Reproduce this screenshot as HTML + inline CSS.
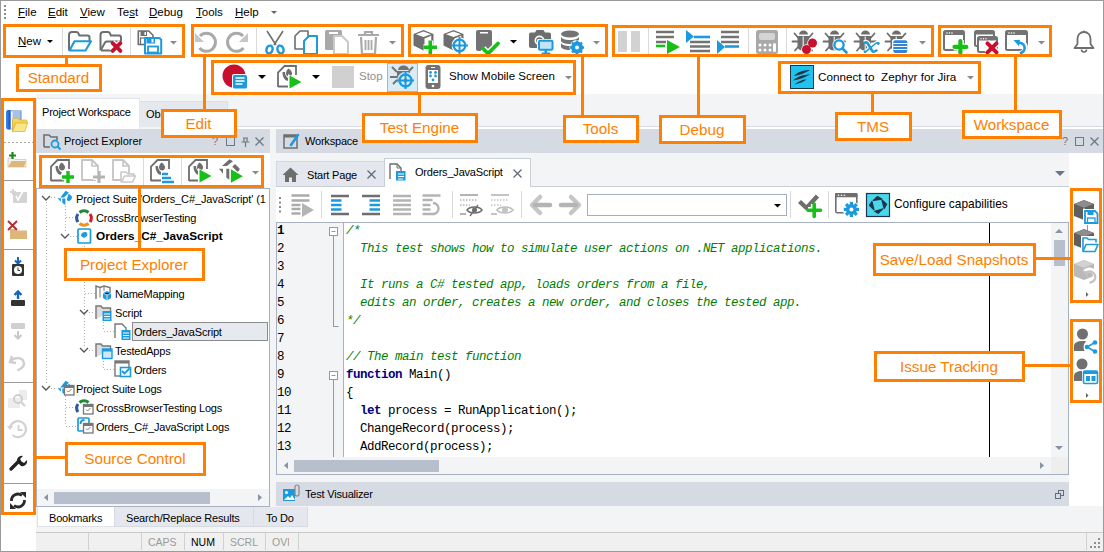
<!DOCTYPE html>
<html><head><meta charset="utf-8">
<style>
*{margin:0;padding:0;box-sizing:border-box}
html,body{width:1104px;height:552px;overflow:hidden;background:#fff}
body{position:relative;font-family:"Liberation Sans",sans-serif;font-size:11px;color:#000}
.a{position:absolute}
.ob{position:absolute;border:3px solid #ff8000}
.ol{position:absolute;background:#ff8000}
.lb{display:flex;align-items:center;justify-content:center;color:#ff8000;font-size:15.2px;white-space:nowrap;line-height:1;background:#fff;padding-right:1px}
.t{position:absolute;white-space:nowrap;line-height:1}
.mono{font-family:"Liberation Mono",monospace;font-size:12.5px;letter-spacing:-0.5px;line-height:18px;white-space:pre}
svg{position:absolute;overflow:visible}
</style></head><body>
<!-- light gray work bg -->
<div class="a" style="left:36px;top:94px;width:1067px;height:438px;background:#f3f4f6"></div>

<!-- status bar -->
<div class="a" style="left:36px;top:532px;width:1067px;height:19px;background:#f0f0f0;border-top:1px solid #c9c9c9"></div>

<!-- CONTENT -->
<!-- menu bar -->
<svg style="left:4px;top:5px" width="3" height="15"><rect x="0" y="0" width="2" height="2" fill="#8a8a8a"/><rect x="0" y="4" width="2" height="2" fill="#8a8a8a"/><rect x="0" y="8" width="2" height="2" fill="#8a8a8a"/><rect x="0" y="12" width="2" height="2" fill="#8a8a8a"/></svg>
<div class="t" style="left:18px;top:7px;font-size:11.5px"><u>F</u>ile</div>
<div class="t" style="left:48px;top:7px;font-size:11.5px"><u>E</u>dit</div>
<div class="t" style="left:80px;top:7px;font-size:11.5px"><u>V</u>iew</div>
<div class="t" style="left:117px;top:7px;font-size:11.5px">Te<u>s</u>t</div>
<div class="t" style="left:149px;top:7px;font-size:11.5px"><u>D</u>ebug</div>
<div class="t" style="left:196px;top:7px;font-size:11.5px"><u>T</u>ools</div>
<div class="t" style="left:235px;top:7px;font-size:11.5px"><u>H</u>elp</div>
<svg style="left:271px;top:11px" width="6" height="4"><path d="M0 0H6L3 3Z" fill="#666"/></svg>

<!-- toolbar row1: Standard -->
<div class="t" style="left:18px;top:36px;font-size:11.5px"><u>N</u>ew</div>
<svg style="left:47px;top:40px" width="6" height="4"><path d="M0 0H6L3 3Z" fill="#000"/></svg>
<div class="a" style="left:62px;top:28px;width:1px;height:27px;background:#dadada"></div>
<svg style="left:64px;top:27px" width="64" height="30" viewBox="0 0 64 30"><path d="M5 23.5V8a3 3 0 0 1 3-3h4.5c1 0 1.6 0.6 2 1.5l0.8 2h8.2a2 2 0 0 1 2 2v3.5" fill="none" stroke="#6e6e6e" stroke-width="2"/><path d="M5.5 23.5L10.5 14.3h16.5l-5.5 9.2z" fill="#fff" stroke="#1b9ae0" stroke-width="2.1" stroke-linejoin="round"/><path d="M36.5 23.5V8a3 3 0 0 1 3-3h4.5c1 0 1.6 0.6 2 1.5l0.8 2h8.2a2 2 0 0 1 2 2v4" fill="none" stroke="#6e6e6e" stroke-width="2"/><path d="M37 22.8L41 15.5c0.5-0.8 1-1 2-1h14M37 23.5h10" fill="none" stroke="#6e6e6e" stroke-width="2"/><path d="M48 15.5l9 9M57 15.5l-9 9" stroke="#fff" stroke-width="6.5"/><path d="M48.6 16.1l7.8 7.8M56.4 16.1l-7.8 7.8" stroke="#c8102e" stroke-width="3.8" stroke-linecap="round"/></svg>
<div class="a" style="left:130px;top:28px;width:1px;height:27px;background:#dadada"></div>
<svg style="left:134px;top:27px" width="30" height="30" viewBox="0 0 30 30"><path d="M4.3 4h10.5l4.2 4.2V17.5H4.3z" fill="#fff" stroke="#6e6e6e" stroke-width="1.6" stroke-linejoin="round"/><rect x="6.5" y="4" width="6.5" height="5" fill="#6e6e6e"/><rect x="10.5" y="5" width="1.5" height="3" fill="#fff"/><rect x="6.5" y="11" width="10" height="6.5" fill="none" stroke="#6e6e6e" stroke-width="1.2"/><path d="M11 11h14.5l1.7 1.8V26.5H11z" fill="#fff" stroke="#1b9ae0" stroke-width="2" stroke-linejoin="round"/><rect x="12.5" y="11" width="8.5" height="5.5" fill="#1b9ae0"/><rect x="17.5" y="12" width="2" height="3.5" fill="#fff"/><rect x="14" y="19.5" width="10" height="6" fill="none" stroke="#1b9ae0" stroke-width="1.8"/></svg>
<svg style="left:170px;top:41px" width="7" height="4"><path d="M0 0H7L3.5 3.5Z" fill="#8a8a8a"/></svg>

<!-- Edit group -->
<svg style="left:194px;top:30px" width="24" height="24" viewBox="0 0 24 24"><path d="M6 6A9 9 0 1 1 5.5 18" fill="none" stroke="#a9a9a9" stroke-width="3"/><path d="M1 3v9h9z" fill="#c6c6c6"/></svg>
<svg style="left:225px;top:30px" width="24" height="24" viewBox="0 0 24 24"><path d="M18 6A9 9 0 1 0 18.5 18" fill="none" stroke="#a9a9a9" stroke-width="3"/><path d="M23 3v9h-9z" fill="#c6c6c6"/></svg>
<div class="a" style="left:256px;top:28px;width:1px;height:27px;background:#dadada"></div>
<svg style="left:264px;top:30px" width="22" height="25" viewBox="0 0 22 25"><path d="M3 1l9 14M19 1l-9 14" stroke="#6e6e6e" stroke-width="1.6" fill="none"/><ellipse cx="5.5" cy="19.5" rx="3" ry="4" transform="rotate(20 5.5 19.5)" fill="none" stroke="#1b9ae0" stroke-width="2.4"/><ellipse cx="16.5" cy="19.5" rx="3" ry="4" transform="rotate(-20 16.5 19.5)" fill="none" stroke="#1b9ae0" stroke-width="2.4"/></svg>
<svg style="left:294px;top:30px" width="25" height="25" viewBox="0 0 25 25"><path d="M1 6l5-5h8v18H1z" fill="#fff" stroke="#6e6e6e" stroke-width="1.6" stroke-linejoin="round"/><path d="M10 11l5-5h8v18H10z" fill="#fff" stroke="#1b9ae0" stroke-width="2" stroke-linejoin="round"/></svg>
<svg style="left:325px;top:30px" width="25" height="25" viewBox="0 0 25 25"><rect x="0" y="0" width="17" height="20" rx="1.5" fill="#a9a9a9"/><rect x="4" y="2" width="9" height="2" fill="#fff"/><path d="M9 6h8l6 6v12H9z" fill="#fff" stroke="#c9c9c9" stroke-width="2" stroke-linejoin="round"/></svg>
<svg style="left:357px;top:30px" width="23" height="25" viewBox="0 0 23 25"><path d="M1 5h21M8 5V2h7v3" fill="none" stroke="#a9a9a9" stroke-width="2.2"/><path d="M4 7l1 17h13l1-17" fill="none" stroke="#a9a9a9" stroke-width="2.2"/><path d="M8.5 10v10M11.5 10v10M14.5 10v10" stroke="#a9a9a9" stroke-width="1.8"/></svg>
<svg style="left:389px;top:41px" width="7" height="4"><path d="M0 0H7L3.5 3.5Z" fill="#8a8a8a"/></svg>

<!-- Tools group -->
<svg style="left:410px;top:27px" width="30" height="30" viewBox="0 0 30 30"><path d="M3.5 7L13.5 3 23.5 7V18.5L13.5 23.5 3.5 18.5z" fill="#6e6e6e"/><path d="M6 7.2L13.5 4.4 21 7.2 13.5 10z" fill="#fff"/><path d="M14.5 11.5L22 8.6V18L14.5 22z" fill="#fff"/><path d="M22 8.6V18" stroke="#6e6e6e" stroke-width="1.5"/><path d="M13.5 20.3h13.5M20.3 13.6v13.5" stroke="#fff" stroke-width="6"/><path d="M13.5 20.3h13.5M20.3 13.6v13.5" stroke="#16c016" stroke-width="3.6"/></svg>
<svg style="left:440px;top:27px" width="30" height="30" viewBox="0 0 30 30"><path d="M3.5 7L13.5 3 23.5 7V18.5L13.5 23.5 3.5 18.5z" fill="#6e6e6e"/><path d="M6 7.2L13.5 4.4 21 7.2 13.5 10z" fill="#fff"/><path d="M14.5 11.5L22 8.6V18L14.5 22z" fill="#fff"/><path d="M22 8.6V18" stroke="#6e6e6e" stroke-width="1.5"/><circle cx="19.5" cy="18.5" r="8" fill="#fff"/><circle cx="19.5" cy="18.5" r="5.8" fill="none" stroke="#1b9ae0" stroke-width="2.2"/><path d="M19.5 10v17M11 18.5h17" stroke="#1b9ae0" stroke-width="2"/></svg>
<svg style="left:475px;top:30px" width="25" height="25" viewBox="0 0 25 25"><rect x="1" y="0" width="16" height="21" rx="2" fill="#737373"/><rect x="5" y="2" width="8" height="1.5" fill="#fff"/><path d="M8 18.5l5 5 10-10" fill="none" stroke="#fff" stroke-width="6.5"/><path d="M8 18.5l5 5 10-10" fill="none" stroke="#16c016" stroke-width="3.8" stroke-linecap="round"/></svg>
<svg style="left:510px;top:40px" width="7" height="4"><path d="M0 0H7L3.5 3.5Z" fill="#000"/></svg>
<svg style="left:520px;top:27px" width="36" height="30" viewBox="0 0 36 30"><path d="M9 7.5a2 2 0 0 1 2-2h4l1.5-2.5h7l1.5 2.5h4a2 2 0 0 1 2 2V19a2 2 0 0 1-2 2H11a2 2 0 0 1-2-2z" fill="#6e6e6e"/><circle cx="19.5" cy="13.5" r="5" fill="#fff"/><circle cx="19.5" cy="13.5" r="3.3" fill="#6e6e6e"/><rect x="17" y="12" width="17" height="12" rx="1.5" fill="#fff"/><rect x="19" y="13.8" width="13.5" height="9" rx="1" fill="#c3e4f7" stroke="#1b9ae0" stroke-width="2"/><rect x="24.5" y="23" width="2.6" height="3" fill="#1b9ae0"/><rect x="21.5" y="25.5" width="9" height="1.8" rx="0.9" fill="#1b9ae0"/></svg>
<svg style="left:560px;top:30px" width="25" height="25" viewBox="0 0 25 25"><ellipse cx="10" cy="4" rx="9" ry="3.5" fill="#737373"/><path d="M1 6.5v4c0 2 4 3.5 9 3.5s9-1.5 9-3.5v-4c0 2-4 3.5-9 3.5s-9-1.5-9-3.5z" fill="#737373"/><path d="M1 12.5v4c0 2 4 3.5 9 3.5s9-1.5 9-3.5v-4c0 2-4 3.5-9 3.5s-9-1.5-9-3.5z" fill="#737373"/><circle cx="17" cy="17.5" r="7.5" fill="#fff"/><circle cx="17" cy="17.5" r="4.5" fill="none" stroke="#1b9ae0" stroke-width="3"/><path d="M17 10.5v14M10 17.5h14M12 12.5l10 10M22 12.5l-10 10" stroke="#1b9ae0" stroke-width="2.4"/><circle cx="17" cy="17.5" r="2" fill="#fff"/></svg>
<svg style="left:593px;top:41px" width="7" height="4"><path d="M0 0H7L3.5 3.5Z" fill="#8a8a8a"/></svg>

<!-- Debug group -->
<div class="a" style="left:618px;top:31px;width:9px;height:21px;background:#d2d2d2"></div>
<div class="a" style="left:631px;top:31px;width:9px;height:21px;background:#d2d2d2"></div>
<div class="a" style="left:648px;top:28px;width:1px;height:27px;background:#dadada"></div>
<svg style="left:656px;top:30px" width="24" height="25" viewBox="0 0 24 25"><path d="M0 2h18M0 7h18M0 12h10" stroke="#737373" stroke-width="2.6"/><path d="M0 16h9" stroke="#16c016" stroke-width="2.6"/><path d="M11 10l13 7-13 7z" fill="#16c016"/></svg>
<svg style="left:686px;top:30px" width="24" height="25" viewBox="0 0 24 25"><path d="M0 0l8 6.5L0 13z" fill="#1b9ae0"/><path d="M8 7h16" stroke="#1b9ae0" stroke-width="2.6"/><path d="M4 12h20M4 16.5h20M4 21h20" stroke="#737373" stroke-width="2.6"/></svg>
<svg style="left:717px;top:30px" width="24" height="25" viewBox="0 0 24 25"><path d="M4 2h18M4 7h18M4 12h18" stroke="#737373" stroke-width="2.6"/><path d="M0 10l8 7-8 7z" fill="#1b9ae0"/><path d="M8 16.5h14" stroke="#1b9ae0" stroke-width="2.6"/></svg>
<div class="a" style="left:748px;top:28px;width:1px;height:27px;background:#dadada"></div>
<svg style="left:756px;top:30px" width="23" height="25" viewBox="0 0 23 25"><rect x="0" y="0" width="22" height="24" rx="2.5" fill="#a9a9a9"/><rect x="3" y="3" width="16" height="7" rx="2" fill="#d4d4d4"/><circle cx="4" cy="15" r="1.5" fill="#fff"/><circle cx="9" cy="15" r="1.5" fill="#fff"/><circle cx="14" cy="15" r="1.5" fill="#fff"/><circle cx="4" cy="20" r="1.5" fill="#fff"/><circle cx="9" cy="20" r="1.5" fill="#fff"/><circle cx="14" cy="20" r="1.5" fill="#fff"/><rect x="17" y="13" width="3" height="9" rx="1.5" fill="#fff"/></svg>
<div class="a" style="left:786px;top:28px;width:1px;height:27px;background:#dadada"></div>
<svg style="left:790px;top:27px" width="30" height="30" viewBox="0 0 30 30"><path d="M9 11.5a4.5 4 0 0 1 9 0z" transform="translate(0,-4)" fill="#6e6e6e"/><path d="M7.5 9h11.5v10c0 3-2 4.5-5.75 4.5S7.5 22 7.5 19z" fill="#6e6e6e"/><path d="M13.2 9.5v14" stroke="#fff" stroke-width="1"/><path d="M4.5 6.5l3.5 4M22.5 6.5l-3.5 4M2.5 14.5h5M19 14.5h5M5 23.5l3.5-4M22 23.5l-3.5-4" stroke="#6e6e6e" stroke-width="1.8" stroke-linecap="round"/><circle cx="22.5" cy="16" r="5.2" fill="#fff"/><circle cx="16.5" cy="22.5" r="5.2" fill="#fff"/><circle cx="22.5" cy="16" r="4.5" fill="#c8102e"/><circle cx="16.5" cy="22.5" r="4.5" fill="#c8102e"/></svg>
<svg style="left:821px;top:27px" width="30" height="30" viewBox="0 0 30 30"><path d="M9 11.5a4.5 4 0 0 1 9 0z" transform="translate(0,-4)" fill="#6e6e6e"/><path d="M7.5 9h11.5v10c0 3-2 4.5-5.75 4.5S7.5 22 7.5 19z" fill="#6e6e6e"/><path d="M13.2 9.5v14" stroke="#fff" stroke-width="1"/><path d="M4.5 6.5l3.5 4M22.5 6.5l-3.5 4M2.5 14.5h5M19 14.5h5M5 23.5l3.5-4M22 23.5l-3.5-4" stroke="#6e6e6e" stroke-width="1.8" stroke-linecap="round"/><circle cx="18" cy="18" r="6.5" fill="#fff"/><path d="M21.5 21.5l4.5 4.5" stroke="#fff" stroke-width="4.5"/><circle cx="18" cy="18" r="4.6" fill="none" stroke="#1b9ae0" stroke-width="2.4"/><path d="M21.5 21.5l4 4" stroke="#1b9ae0" stroke-width="2.6" stroke-linecap="round"/></svg>
<svg style="left:852px;top:27px" width="30" height="30" viewBox="0 0 30 30"><path d="M9 11.5a4.5 4 0 0 1 9 0z" transform="translate(0,-4)" fill="#6e6e6e"/><path d="M7.5 9h11.5v10c0 3-2 4.5-5.75 4.5S7.5 22 7.5 19z" fill="#6e6e6e"/><path d="M13.2 9.5v14" stroke="#fff" stroke-width="1"/><path d="M4.5 6.5l3.5 4M22.5 6.5l-3.5 4M2.5 14.5h5M19 14.5h5M5 23.5l3.5-4M22 23.5l-3.5-4" stroke="#6e6e6e" stroke-width="1.8" stroke-linecap="round"/><path d="M12.5 15.8Q14.5 14.5 15.8 16.5L20.5 24.3Q21.3 25.5 24.5 23.5" fill="none" stroke="#fff" stroke-width="5"/><path d="M26.5 16.3Q24.5 15.3 23 17L13.5 24.8" fill="none" stroke="#fff" stroke-width="4"/><path d="M12.5 15.8Q14.5 14.5 15.8 16.5L20.5 24.3Q21.3 25.5 24.5 23.5" fill="none" stroke="#1b9ae0" stroke-width="2.6" stroke-linecap="round"/><path d="M26.5 16.3Q24.5 15.3 23 17L13.5 24.8" fill="none" stroke="#1b9ae0" stroke-width="1.5" stroke-linecap="round"/><circle cx="26.3" cy="16.5" r="1.4" fill="#1b9ae0"/><circle cx="13" cy="24.8" r="1.4" fill="#1b9ae0"/></svg>
<svg style="left:883px;top:27px" width="30" height="30" viewBox="0 0 30 30"><path d="M9 11.5a4.5 4 0 0 1 9 0z" transform="translate(0,-4)" fill="#6e6e6e"/><path d="M7.5 9h11.5v10c0 3-2 4.5-5.75 4.5S7.5 22 7.5 19z" fill="#6e6e6e"/><path d="M13.2 9.5v14" stroke="#fff" stroke-width="1"/><path d="M4.5 6.5l3.5 4M22.5 6.5l-3.5 4M2.5 14.5h5M19 14.5h5M5 23.5l3.5-4M22 23.5l-3.5-4" stroke="#6e6e6e" stroke-width="1.8" stroke-linecap="round"/><rect x="9" y="12" width="16.5" height="15" rx="2.5" fill="#fff"/><rect x="10.3" y="13.3" width="14" height="12.7" rx="2" fill="#2f86d8"/><path d="M10.3 16.5h14M10.3 19.5h14M10.3 22.5h14" stroke="#fff" stroke-width="1"/></svg>
<svg style="left:919px;top:41px" width="7" height="4"><path d="M0 0H7L3.5 3.5Z" fill="#8a8a8a"/></svg>

<!-- Row2: Test Engine -->
<svg style="left:222px;top:64px" width="27" height="26" viewBox="0 0 27 26"><circle cx="12" cy="12" r="11.5" fill="#c8102e"/><rect x="10" y="10" width="16" height="15.5" rx="2" fill="#fff"/><rect x="11" y="11" width="14" height="13.5" rx="1.5" fill="#1b9ae0"/><path d="M13.5 14h9M13.5 17h9M13.5 20h7" stroke="#fff" stroke-width="1.3"/></svg>
<svg style="left:258px;top:75px" width="8" height="4"><path d="M0 0H8L4 4Z" fill="#000"/></svg>
<svg style="left:277px;top:64px" width="26" height="26" viewBox="0 0 26 26"><path d="M1 23V8.5L7.5 2H19v9M1 22.5h13" fill="none" stroke="#6e6e6e" stroke-width="1.8"/><path d="M11.5 4.5c2 1 3.5 3 3.5 5s-1.5 3-3 3-3-1-3-3 1-4 2.5-5z" fill="#6e6e6e"/><path d="M5.5 8h2.5c0 3 1.5 5.5 4 6.5l-1.5 2.5c-3-1-5-4-5-9z" fill="#6e6e6e"/><path d="M11 10l14 8-14 8z" fill="#fff"/><path d="M12.5 11.5l12 6.5-12 6.5z" fill="#16c016"/></svg>
<svg style="left:312px;top:75px" width="8" height="4"><path d="M0 0H8L4 4Z" fill="#000"/></svg>
<div class="a" style="left:332px;top:66px;width:22px;height:22px;background:#d0d0d0"></div>
<div class="t" style="left:359px;top:71px;font-size:11.5px;color:#8f8f8f">Stop</div>
<div class="a" style="left:387px;top:63px;width:31px;height:29px;background:#daebf3;border:1px solid #92bfd8"></div>
<svg style="left:389px;top:64px" width="27" height="26" viewBox="0 0 27 26"><path d="M9 6a5.5 4.5 0 0 1 11 0z" fill="#737373"/><path d="M8 7h13v9c0 4-3 6-6.5 6S8 20 8 16z" fill="#737373"/><path d="M3 3l5 5M24 3l-4 4M1 13h7M4 20l4-4" stroke="#737373" stroke-width="2"/><circle cx="16.5" cy="16.5" r="8.5" fill="#daebf3"/><circle cx="16.5" cy="16.5" r="6" fill="none" stroke="#1b9ae0" stroke-width="2.4"/><path d="M16.5 8v17M8 16.5h17" stroke="#1b9ae0" stroke-width="2"/><circle cx="16.5" cy="16.5" r="2" fill="#1b9ae0"/></svg>
<svg style="left:425px;top:65px" width="16" height="25" viewBox="0 0 16 25"><rect x="0.5" y="0" width="15" height="24" rx="3" fill="#737373"/><rect x="3" y="5" width="10" height="13" fill="#fff"/><rect x="6" y="2" width="4" height="1" fill="#fff"/><circle cx="8" cy="21" r="1.3" fill="#fff"/><circle cx="5.5" cy="7.5" r="1.4" fill="#1b9ae0"/><circle cx="10.5" cy="7.5" r="1.4" fill="#1b9ae0"/><circle cx="5.5" cy="11" r="1.4" fill="#1b9ae0"/><circle cx="10.5" cy="11" r="1.4" fill="#1b9ae0"/><circle cx="8" cy="15" r="1.4" fill="#1b9ae0"/></svg>
<div class="t" style="left:449px;top:71px;font-size:11.55px">Show Mobile Screen</div>
<svg style="left:565px;top:76px" width="7" height="4"><path d="M0 0H7L3.5 3.5Z" fill="#8a8a8a"/></svg>

<!-- Row2: TMS -->
<svg style="left:790px;top:65px" width="24" height="24" viewBox="0 0 24 24"><rect x="0.5" y="0.5" width="23" height="23" fill="#1ec3ef" stroke="#1e3346" stroke-width="1"/><path d="M4 11c3-4 10-6 16-6-4 2-9 5-16 6zM3 15.5c4-4 11-6 17-6-4 2.5-10 5-17 6zM4.5 19.5c3-3 8-5 12-5-2.5 2-7 4-12 5z" fill="#1e3346"/></svg>
<div class="t" style="left:818px;top:71px;font-size:11.7px">Connect to&nbsp; Zephyr for Jira</div>
<svg style="left:967px;top:76px" width="7" height="4"><path d="M0 0H7L3.5 3.5Z" fill="#8a8a8a"/></svg>

<!-- left vertical toolbar -->
<svg style="left:0;top:98px" width="36" height="420" viewBox="0 98 36 420">
<!-- icon1 book+folder --><defs><linearGradient id="bk" x1="0" x2="1"><stop offset="0" stop-color="#3f8cf0"/><stop offset="1" stop-color="#1450c8"/></linearGradient><linearGradient id="fd" x1="0" y1="0" x2="0" y2="1"><stop offset="0" stop-color="#f7dc6a"/><stop offset="1" stop-color="#e9bf35"/></linearGradient></defs><path d="M6.5 112.5c0-1.5 1-2.5 2.5-2.5h11.5c1 0 1.5 0.5 1.5 1.5V128c0 1-0.5 1.5-1.5 1.5H9c-1.5 0-2.5-1-2.5-2.5z" fill="#a9c1ea"/><path d="M6 112c0-1.2 1-2 2-2h2.5v19.5H8c-1 0-2-0.8-2-2z" fill="url(#bk)"/><rect x="11" y="111.5" width="1.6" height="17" fill="#f4f8ff"/><path d="M20.5 111v18" stroke="#8aa6d6" stroke-width="1"/><path d="M12.5 131.5v-12c0-0.8 0.5-1.3 1.3-1.3h4l1.5 1.8h6.5c0.8 0 1.3 0.5 1.3 1.3v1.7" fill="url(#fd)" stroke="#d7ac2a" stroke-width="0.7"/><path d="M12.5 131.5l3.2-8.5h12l-3 8.5z" fill="#fbe58a" stroke="#d7ac2a" stroke-width="0.7"/>
<path d="M4 142.5h29" stroke="#a8a8a8" stroke-width="1" stroke-dasharray="2 2"/>
<!-- icon2 folder + plus -->
<path d="M8 167v-9h5l1.5 1.5H26V167z" fill="#f2f2f2" stroke="#d7c7a8" stroke-width="0.8"/><path d="M8 167l3.5-6H26l-2 6z" fill="#ddb67a"/><path d="M9 155.5h7M12.5 152v7" stroke="#1a8a1a" stroke-width="2.2"/>
<path d="M4 180.5h29" stroke="#9a9a9a" stroke-width="1"/>
<!-- icon3 light gray -->
<rect x="13" y="192" width="14" height="11" fill="#d4d4d4"/><path d="M10 192h6M13 189v6" stroke="#d4d4d4" stroke-width="2"/><path d="M16 196l2 4 5-9" stroke="#fff" stroke-width="1.6" fill="none"/>
<!-- icon4 red X + folder -->
<path d="M10 239v-10h5l1.5 1.5H27V239z" fill="#ddb67a"/><path d="M8 221l9 9M17 221l-9 9" stroke="#b5282e" stroke-width="1.8"/>
<path d="M4 249.5h29" stroke="#9a9a9a" stroke-width="1"/>
<!-- icon5 arrow + clock -->
<path d="M18 257v6M15 260.5l3 3 3-3" stroke="#1565c0" stroke-width="2" fill="none"/><rect x="12" y="264" width="12" height="12" rx="1" fill="#333"/><circle cx="18" cy="270" r="4" fill="#fff"/><path d="M18 267.5v3h2" stroke="#333" stroke-width="1" fill="none"/>
<!-- icon6 up arrow + bar -->
<path d="M18 299v-7M14.5 295l3.5-3.5 3.5 3.5" stroke="#1565c0" stroke-width="2.4" fill="none"/><rect x="11" y="300" width="14" height="6" rx="1" fill="#333"/>
<!-- icon7 -->
<rect x="11" y="323" width="14" height="6" rx="1" fill="#d0d0d0"/><path d="M18 331v7M14.5 335l3.5 3.5 3.5-3.5" stroke="#c8c8c8" stroke-width="2" fill="none"/>
<!-- icon8 undo -->
<path d="M12 356l-2 6 6 1M10.5 361.5c3-4 11-5 13 0 2 4-2 7-6 9" fill="none" stroke="#cfcfcf" stroke-width="2.4"/>
<path d="M4 382.5h29" stroke="#9a9a9a" stroke-width="1"/>
<!-- icon9 search -->
<rect x="19" y="390" width="8" height="10" fill="#ececec"/><rect x="8" y="398" width="12" height="10" fill="#ececec"/><circle cx="18" cy="399" r="4" fill="none" stroke="#cfcfcf" stroke-width="2"/><path d="M21 402l4 4" stroke="#cfcfcf" stroke-width="2.2"/>
<!-- icon10 history -->
<path d="M10 428a8 8 0 1 1 2.5 7" fill="none" stroke="#d2d2d2" stroke-width="2.2"/><path d="M7 426l3 4 3-4z" fill="#d2d2d2"/><path d="M18.5 425v5h4" fill="none" stroke="#d2d2d2" stroke-width="1.8"/>
<!-- icon11 wrench -->
<path d="M11 469l8-8" stroke="#222" stroke-width="3.4" stroke-linecap="round"/><path d="M17 462a5 5 0 0 1 6-6l-3 3 1.5 2.5 2.5 1.5 3-3a5 5 0 0 1-6 6z" fill="#222"/>
<path d="M4 483.5h29" stroke="#9a9a9a" stroke-width="1"/>
<!-- icon12 sync -->
<path d="M11.5 501a6.5 6.5 0 0 1 10.5-5.5" fill="none" stroke="#2a2a2a" stroke-width="2.8"/><path d="M24.5 500a6.5 6.5 0 0 1-10.5 5.5" fill="none" stroke="#2a2a2a" stroke-width="2.8"/><path d="M20 492h6v6z" fill="#2a2a2a"/><path d="M16 509h-6v-6z" fill="#2a2a2a"/>
</svg>

<div class="a" style="left:228px;top:126px;width:875px;height:1px;background:#d6dbe1"></div>
<div class="a" style="left:228px;top:127px;width:875px;height:2px;background:#fff"></div>
<!-- left panel tabs -->
<div class="a" style="left:36px;top:98px;width:104px;height:31px;background:#fff;border-top:1px solid #dfe3e9;border-left:1px solid #e4e7ec;border-right:1px solid #e4e7ec"></div>
<div class="t" style="left:42px;top:107px;font-size:11px;letter-spacing:-0.2px">Project Workspace</div>
<div class="a" style="left:140px;top:101px;width:88px;height:26px;background:#e5e8ed;border-top:1px solid #dadee5;border-right:1px solid #dadee5"></div>
<div class="t" style="left:146px;top:109px;font-size:11px">Ob</div>
<!-- PE header -->
<div class="a" style="left:36px;top:129px;width:234px;height:24px;background:#d6dae2"></div>
<svg style="left:43px;top:133px" width="18" height="17" viewBox="0 0 18 17"><path d="M1 14V2h5l2 2h6v3" fill="none" stroke="#6e6e6e" stroke-width="1.6"/><path d="M1 14h6" stroke="#6e6e6e" stroke-width="1.6"/><circle cx="12" cy="11" r="3.5" fill="none" stroke="#1b9ae0" stroke-width="1.8"/><path d="M14.5 13.5l3 3" stroke="#1b9ae0" stroke-width="2"/></svg>
<div class="t" style="left:64px;top:136px;font-size:11px">Project Explorer</div>
<div class="t" style="left:212px;top:136px;font-size:11px;color:#6f7784">?</div>
<div class="a" style="left:226px;top:137px;width:9px;height:9px;border:1px solid #6f7784"></div>
<svg style="left:241px;top:137px" width="9" height="10" viewBox="0 0 9 10"><path d="M2 1h5M3 1v4M6 1v4M0.5 5h8M4.5 5v5" stroke="#6f7784" stroke-width="1.2" fill="none"/></svg>
<svg style="left:255px;top:137px" width="9" height="9" viewBox="0 0 9 9"><path d="M0.5 0.5l8 8M8.5 0.5l-8 8" stroke="#6f7784" stroke-width="1.3"/></svg>
<!-- PE toolbar -->
<div class="a" style="left:36px;top:153px;width:234px;height:35px;background:#fff"></div>
<svg style="left:50px;top:159px" width="25" height="25" viewBox="0 0 25 25"><path d="M1 22V7.5L7.5 1H19v9M1 21.5h13" fill="none" stroke="#6e6e6e" stroke-width="1.8"/><path d="M11.5 3.5c2 1 3.5 3 3.5 5s-1.5 3-3 3-3-1-3-3 1-4 2.5-5z" fill="#6e6e6e"/><path d="M5.5 7h2.5c0 3 1.5 5.5 4 6.5l-1.5 2.5c-3-1-5-4-5-9z" fill="#6e6e6e"/><path d="M12 18h12M18 12v12" stroke="#fff" stroke-width="6.5"/><path d="M12 18h12M18 12v12" stroke="#16c016" stroke-width="3.4"/></svg>
<svg style="left:81px;top:159px" width="25" height="25" viewBox="0 0 25 25"><path d="M1 1h10l6 6v14H1z" fill="#fff" stroke="#c4c4c4" stroke-width="1.8" stroke-linejoin="round"/><path d="M11 1v6h6" fill="none" stroke="#c4c4c4" stroke-width="1.6"/><path d="M12 18h12M18 12v12" stroke="#fff" stroke-width="6"/><path d="M12 18h12M18 12v12" stroke="#b4b4b4" stroke-width="3.2"/></svg>
<svg style="left:112px;top:159px" width="25" height="25" viewBox="0 0 25 25"><path d="M1 1h10l6 6v14H1z" fill="#fff" stroke="#c4c4c4" stroke-width="1.8" stroke-linejoin="round"/><path d="M11 1v6h6" fill="none" stroke="#c4c4c4" stroke-width="1.6"/><path d="M9 23V13h5l2 2h6v2M9.5 23l3-6h11l-3 6z" fill="#fff" stroke="#c9c9c9" stroke-width="1.6" stroke-linejoin="round"/></svg>
<div class="a" style="left:143px;top:157px;width:1px;height:28px;background:#dadada"></div>
<svg style="left:150px;top:159px" width="25" height="25" viewBox="0 0 25 25"><path d="M1 22V7.5L7.5 1H19v9M1 21.5h13" fill="none" stroke="#6e6e6e" stroke-width="1.8"/><path d="M11.5 3.5c2 1 3.5 3 3.5 5s-1.5 3-3 3-3-1-3-3 1-4 2.5-5z" fill="#6e6e6e"/><path d="M5.5 7h2.5c0 3 1.5 5.5 4 6.5l-1.5 2.5c-3-1-5-4-5-9z" fill="#6e6e6e"/><rect x="11" y="13" width="14" height="12" fill="#fff"/><path d="M12 15h6M12 19h9M12 23h12" stroke="#1b9ae0" stroke-width="2.4"/></svg>
<div class="a" style="left:181px;top:157px;width:1px;height:28px;background:#dadada"></div>
<svg style="left:188px;top:159px" width="25" height="25" viewBox="0 0 25 25"><path d="M1 22V7.5L7.5 1H19v9M1 21.5h13" fill="none" stroke="#6e6e6e" stroke-width="1.8"/><path d="M11.5 3.5c2 1 3.5 3 3.5 5s-1.5 3-3 3-3-1-3-3 1-4 2.5-5z" fill="#6e6e6e"/><path d="M5.5 7h2.5c0 3 1.5 5.5 4 6.5l-1.5 2.5c-3-1-5-4-5-9z" fill="#6e6e6e"/><path d="M10 9l15 8-15 8z" fill="#fff"/><path d="M11.5 10.5l12 6.5-12 6.5z" fill="#16c016"/></svg>
<svg style="left:219px;top:159px" width="25" height="25" viewBox="0 0 25 25"><path d="M3 7L10.5 0.2 14 2.2 7.8 7z" fill="#6e6e6e"/><path d="M0 9.7h4v5z" fill="#6e6e6e"/><path d="M7.3 9.7h3v11l-3-2.2z" fill="#6e6e6e"/><path d="M13.3 7.8L16 5l4.6 4.4-0.3 2.2-1.9 1.1z" fill="#6e6e6e"/><path d="M11.9 10.2l12 7.1-12 6.5z" fill="#16c016"/></svg>
<svg style="left:252px;top:171px" width="7" height="4"><path d="M0 0H7L3.5 3.5Z" fill="#8a8a8a"/></svg>
<!-- tree panel -->
<div class="a" style="left:36px;top:188px;width:234px;height:319px;background:#fff;border:1px solid #a7b1c1;border-right-color:#a7b1c1"></div>
<svg style="left:36px;top:188px" width="234" height="300" viewBox="36 188 234 300">
<g stroke="#b0b0b0" stroke-width="1" stroke-dasharray="1 2" fill="none">
<path d="M46.5 202V384M51 197.5h6M65.5 206V233M66 217.5h10M70 236.5h7M84.5 246V347M85 293.5h10M89 312.5h6M103.5 322V331M104 331.5h10M89 350.5h6M103.5 358V369M104 369.5h10M51 388.5h6M65.5 396V426M66 407.5h10M66 426.5h10"/>
</g>
<g fill="none" stroke="#555" stroke-width="1.3"><path d="M42 196l4 4 4-4M61 234l4 4 4-4M80 310l4 4 4-4M80 348l4 4 4-4M42 386l4 4 4-4"/></g>
<!-- TC logo -->
<g fill="#1b9ae0"><path d="M60.3 197.5L65.6 190.8 68.9 192.7 64 197.5z"/><path d="M57.5 198.2h3.4v3.6z"/><path d="M62.3 198.5h3.1v6.5l-3.1-2.2z"/><path d="M68.5 194c2 0.5 3.5 2 3.5 3.5s-1.5 3-3 3.5c-1.5 0.5-2.5-1-2-2.5z"/></g>
<!-- CBT logo -->
<g fill="none" stroke-width="3"><path d="M79.5 212.5a7 7 0 0 1 9 0" stroke="#1f8a3b"/><path d="M90 214a7 7 0 0 1 0 8" stroke="#d0212b"/><path d="M88.5 223.5a7 7 0 0 1-9 0" stroke="#f39020"/><path d="M78 222a7 7 0 0 1 0-8" stroke="#2b5b9c"/></g>
<!-- project doc -->
<rect x="78" y="229" width="12.5" height="14" rx="1" fill="#fff" stroke="#1b9ae0" stroke-width="1.7"/><path d="M81 236c0-3 2-4 4-4 2 0 3 2 2 4-1 1-2 1-3 2z" fill="#1b9ae0"/>
<!-- NameMapping -->
<path d="M96 299v-13l4 1.5 4-1.5 6 1.5v6" fill="none" stroke="#777" stroke-width="1.4"/><path d="M100 287.5v10M104 286v5" stroke="#777" stroke-width="1"/><path d="M103 293l4-2 4 2v5l-4 2.5-4-2.5z" fill="#1b9ae0"/><path d="M103 293l4 2 4-2M107 295v5" stroke="#fff" stroke-width="0.8"/>
<!-- Script folder -->
<path d="M96 319v-13h5l1.5 2h8v4" fill="#ddd" stroke="#777" stroke-width="1.4"/><rect x="102.5" y="311" width="9" height="10" fill="#1b9ae0"/><path d="M104 314h6M104 316.5h6M104 319h6" stroke="#fff" stroke-width="1"/>
<!-- Orders_JavaScript -->
<rect x="132.5" y="322.5" width="135" height="18" fill="#e6e9ee" stroke="#222" stroke-width="1" stroke-dasharray="1 1"/>
<path d="M115 338v-14h7l4 4v3" fill="#fff" stroke="#777" stroke-width="1.4"/><rect x="121.5" y="330" width="9" height="10" fill="#1b9ae0"/><path d="M123 333h6M123 335.5h6M123 338h6" stroke="#fff" stroke-width="1"/>
<!-- TestedApps -->
<path d="M96 357v-13h5l1.5 2h8v4" fill="#ddd" stroke="#777" stroke-width="1.4"/><rect x="102.5" y="349" width="9.5" height="9.5" fill="#cfe8f8" stroke="#1b9ae0" stroke-width="1.4"/><rect x="102.5" y="349" width="9.5" height="2.5" fill="#1b9ae0"/>
<!-- Orders app -->
<rect x="115" y="361" width="14" height="15" fill="#fff" stroke="#777" stroke-width="1.4"/><rect x="115" y="361" width="14" height="2.5" fill="#777"/><rect x="120.5" y="367.5" width="10" height="9" fill="#fff" stroke="#1b9ae0" stroke-width="1.6"/><path d="M122 371l2.5 2.5 5-5" fill="none" stroke="#1b9ae0" stroke-width="1.8"/>
<!-- Project Suite Logs -->
<g fill="#1b9ae0" transform="translate(0,190)"><path d="M60.3 197.5L65.6 190.8 68.9 192.7 64 197.5z"/><path d="M57.5 198.2h3.4v3.6z"/><path d="M62.3 198.5h3.1v6.5l-3.1-2.2z"/><path d="M68.5 194c2 0.5 3.5 2 3.5 3.5s-1.5 3-3 3.5c-1.5 0.5-2.5-1-2-2.5z"/></g>
<rect x="64.5" y="385.5" width="9.5" height="9.5" fill="#fff" stroke="#777" stroke-width="1.3"/><rect x="64.5" y="385.5" width="9.5" height="2.5" fill="#777"/><path d="M67 390.5l1.5 1.5 3-3" fill="none" stroke="#777" stroke-width="1"/>
<!-- CBT logs -->
<g fill="none" stroke-width="3"><path d="M79.5 402.5a7 7 0 0 1 9 0" stroke="#1f8a3b"/><path d="M90 404a7 7 0 0 1 0 3" stroke="#d0212b"/><path d="M78 412a7 7 0 0 1 0-8" stroke="#2b5b9c"/></g>
<rect x="83.5" y="404.5" width="9.5" height="9.5" fill="#fff" stroke="#777" stroke-width="1.3"/><rect x="83.5" y="404.5" width="9.5" height="2.5" fill="#777"/><path d="M86 409.5l1.5 1.5 3-3" fill="none" stroke="#777" stroke-width="1"/>
<!-- Orders_C# logs -->
<rect x="78" y="418" width="11" height="13" rx="1" fill="#fff" stroke="#1b9ae0" stroke-width="1.7"/><path d="M80.5 424c0-3 2-4 4-4" stroke="#1b9ae0" stroke-width="2" fill="none"/>
<rect x="83.5" y="423.5" width="9.5" height="9.5" fill="#fff" stroke="#777" stroke-width="1.3"/><rect x="83.5" y="423.5" width="9.5" height="2.5" fill="#777"/><path d="M86 428.5l1.5 1.5 3-3" fill="none" stroke="#777" stroke-width="1"/>
</svg>
<div class="t" style="left:76px;top:194px;letter-spacing:-0.1px;width:192px;overflow:hidden">Project Suite 'Orders_C#_JavaScript' (1</div>
<div class="t" style="left:96px;top:213px;letter-spacing:-0.2px">CrossBrowserTesting</div>
<div class="t" style="left:96px;top:231px;font-size:11.8px;font-weight:bold">Orders_C#_JavaScript</div>
<div class="t" style="left:115px;top:289px;letter-spacing:-0.2px">NameMapping</div>
<div class="t" style="left:115px;top:308px;letter-spacing:-0.2px">Script</div>
<div class="t" style="left:134px;top:327px;letter-spacing:-0.2px">Orders_JavaScript</div>
<div class="t" style="left:115px;top:346px;letter-spacing:-0.2px">TestedApps</div>
<div class="t" style="left:134px;top:365px;letter-spacing:-0.2px">Orders</div>
<div class="t" style="left:76px;top:384px;letter-spacing:-0.2px">Project Suite Logs</div>
<div class="t" style="left:96px;top:403px;letter-spacing:-0.2px">CrossBrowserTesting Logs</div>
<div class="t" style="left:96px;top:422px;letter-spacing:-0.2px">Orders_C#_JavaScript Logs</div>
<!-- PE hscroll -->
<div class="a" style="left:37px;top:489px;width:232px;height:17px;background:#f3f4f6"></div>
<svg style="left:44px;top:494px" width="4" height="7"><path d="M4 0V7L0 3.5Z" fill="#8a93a3"/></svg>
<div class="a" style="left:54px;top:492px;width:156px;height:12px;background:#b8bfcc"></div>
<svg style="left:258px;top:494px" width="4" height="7"><path d="M0 0V7L4 3.5Z" fill="#8a93a3"/></svg>

<!-- WORKSPACE PANEL -->
<div class="a" style="left:276px;top:129px;width:827px;height:24px;background:#d6dae2"></div>
<svg style="left:283px;top:133px" width="17" height="16" viewBox="0 0 17 16"><rect x="1" y="2" width="13" height="13" fill="none" stroke="#6e6e6e" stroke-width="1.5"/><rect x="1" y="2" width="13" height="2.5" fill="#6e6e6e"/><path d="M8 12l7-10" stroke="#1b9ae0" stroke-width="2.6" stroke-linecap="round"/></svg>
<div class="t" style="left:305px;top:136px;font-size:11px;letter-spacing:-0.2px">Workspace</div>
<div class="t" style="left:1062px;top:136px;font-size:11px;color:#6f7784">?</div>
<div class="a" style="left:1075px;top:137px;width:9px;height:9px;border:1px solid #6f7784"></div>
<svg style="left:1090px;top:137px" width="9" height="9" viewBox="0 0 9 9"><path d="M0.5 0.5l8 8M8.5 0.5l-8 8" stroke="#6f7784" stroke-width="1.3"/></svg>
<div class="a" style="left:1069px;top:153px;width:34px;height:353px;background:#fff"></div>
<!-- tabs -->
<div class="a" style="left:276px;top:161px;width:109px;height:26px;background:#e4e8ee;border:1px solid #d3d8e0;border-bottom:none"></div>
<svg style="left:282px;top:167px" width="17" height="15" viewBox="0 0 17 15"><path d="M8.5 0.5L0.5 8h2.5v7h4v-4.5h3V15h4V8h2.5z" fill="#6e6e6e"/></svg>
<div class="t" style="left:307px;top:170px;font-size:11px;letter-spacing:-0.2px">Start Page</div>
<svg style="left:367px;top:170px" width="9" height="9" viewBox="0 0 9 9"><path d="M0.5 0.5l8 8M8.5 0.5l-8 8" stroke="#5f6b7c" stroke-width="1.3"/></svg>
<div class="a" style="left:384px;top:158px;width:147px;height:30px;background:#fff;border:1px solid #c9cfd9;border-bottom:none"></div>
<svg style="left:389px;top:163px" width="17" height="18" viewBox="0 0 17 18"><path d="M1 16V1h7l4 4v4" fill="#fff" stroke="#6e6e6e" stroke-width="1.4"/><path d="M8 1v4h4" fill="none" stroke="#6e6e6e" stroke-width="1"/><rect x="7" y="8" width="9.5" height="9.5" fill="#1b9ae0"/><path d="M9 11h6M9 13.5h6M9 16h5" stroke="#fff" stroke-width="1"/></svg>
<div class="t" style="left:415px;top:167px;font-size:11px;letter-spacing:-0.2px">Orders_JavaScript</div>
<svg style="left:513px;top:169px" width="9" height="9" viewBox="0 0 9 9"><path d="M0.5 0.5l8 8M8.5 0.5l-8 8" stroke="#5f6b7c" stroke-width="1.3"/></svg>
<div class="a" style="left:531px;top:186px;width:538px;height:1px;background:#c9cfd9"></div>
<div class="a" style="left:276px;top:186px;width:108px;height:1px;background:#c9cfd9"></div>
<svg style="left:1055px;top:171px" width="10" height="6"><path d="M0 0H10L5 5Z" fill="#6b7585"/></svg>
<!-- editor toolbar -->
<div class="a" style="left:276px;top:187px;width:793px;height:35px;background:#fff"></div>
<svg style="left:276px;top:187px" width="793" height="35" viewBox="276 187 793 35">
<g fill="#8a8a8a"><rect x="279" y="197" width="2" height="2"/><rect x="279" y="201.5" width="2" height="2"/><rect x="279" y="206" width="2" height="2"/><rect x="279" y="210.5" width="2" height="2"/></g>
<path d="M291.5 195.5h18M291.5 200.5h18M291.5 205h9M291.5 209h9M291.5 213.5h9" stroke="#ababab" stroke-width="2.6"/><path d="M302 203l12 7-12 7z" fill="#b4b4b4"/>
<path d="M321.5 191v27" stroke="#dadada"/>
<path d="M331 196h18M331 214h18" stroke="#6e6e6e" stroke-width="2.6"/><path d="M331 200.5h10.5M331 205h10.5M331 209.5h10.5" stroke="#1b9ae0" stroke-width="2.6"/>
<path d="M362 196h18M362 214h18" stroke="#6e6e6e" stroke-width="2.6"/><path d="M369.5 200.5H380M369.5 205H380M369.5 209.5H380" stroke="#1b9ae0" stroke-width="2.6"/>
<path d="M393 196h18M393 200.5h18M393 205h18M393 209.5h18M393 214h18" stroke="#b4b4b4" stroke-width="2.6"/>
<path d="M422.5 195.5h18M422.5 200h10M422.5 205h8M422.5 209.5h8M422.5 214h12" stroke="#b4b4b4" stroke-width="2.4"/><path d="M433 203a5.5 5.5 0 1 1 0 11" fill="none" stroke="#b4b4b4" stroke-width="2.4"/>
<path d="M452.5 191v27" stroke="#dadada"/>
<path d="M460 195h18" stroke="#b4b4b4" stroke-width="2"/><path d="M460 200h18M460 205h10" stroke="#b4b4b4" stroke-width="1.4" stroke-dasharray="1.5 1.5"/><path d="M460 214h6" stroke="#b4b4b4" stroke-width="2"/><path d="M467 210c3-4 12-4 15 0-3 4-12 4-15 0z" fill="#fff" stroke="#6e6e6e" stroke-width="1.5"/><circle cx="474.5" cy="210" r="2.5" fill="#6e6e6e"/><path d="M470 216l8-11" stroke="#6e6e6e" stroke-width="1.3"/>
<path d="M491 195h18" stroke="#c4c4c4" stroke-width="2"/><path d="M491 200h18M491 205h10" stroke="#c4c4c4" stroke-width="1.4" stroke-dasharray="1.5 1.5"/><path d="M491 214h6" stroke="#c4c4c4" stroke-width="2"/><path d="M497 210c3-4 13-4 16 0-3 4-13 4-16 0z" fill="#fff" stroke="#bdbdbd" stroke-width="1.5"/><circle cx="505" cy="210" r="3" fill="#c4c4c4"/>
<path d="M521.5 191v27" stroke="#dadada"/>
<path d="M540 197l-8 8 8 8" fill="none" stroke="#c6c6c6" stroke-width="4.5" stroke-linecap="round" stroke-linejoin="round"/><path d="M535 205h15" stroke="#b4b4b4" stroke-width="4.5" stroke-linecap="round"/>
<path d="M571 197l8 8-8 8" fill="none" stroke="#c6c6c6" stroke-width="4.5" stroke-linecap="round" stroke-linejoin="round"/><path d="M561 205h15" stroke="#b4b4b4" stroke-width="4.5" stroke-linecap="round"/>
<rect x="587.5" y="194.5" width="199" height="21" fill="#fff" stroke="#a3adbd"/>
<path d="M774 204h7l-3.5 3.5z" fill="#000"/>
<path d="M790.5 191v27M828.5 191v27" stroke="#dadada"/>
<path d="M799.5 201.5l7 6.5 11-12" fill="none" stroke="#6e6e6e" stroke-width="4.4" stroke-linejoin="round"/><path d="M808 210.2h12.5M814.2 204v12.5" stroke="#fff" stroke-width="6.5"/><path d="M808 210.2h12.5M814.2 204v12.5" stroke="#16c016" stroke-width="3.6" stroke-linecap="round"/>
<rect x="835.8" y="193.8" width="21" height="19" rx="1.5" fill="#fff" stroke="#6e6e6e" stroke-width="1.6"/><rect x="835" y="193" width="22.5" height="4.2" rx="1" fill="#6e6e6e"/><circle cx="838.5" cy="195.2" r="0.8" fill="#fff"/><circle cx="841.5" cy="195.2" r="0.8" fill="#fff"/><circle cx="844.5" cy="195.2" r="0.8" fill="#fff"/><circle cx="851.4" cy="209.4" r="8.5" fill="#fff"/><g transform="translate(851.4 209.4)"><circle r="5.4" fill="#1b9ae0"/><rect x="-1.6" y="-7.6" width="3.2" height="4" fill="#1b9ae0" transform="rotate(0)"/><rect x="-1.6" y="-7.6" width="3.2" height="4" fill="#1b9ae0" transform="rotate(45)"/><rect x="-1.6" y="-7.6" width="3.2" height="4" fill="#1b9ae0" transform="rotate(90)"/><rect x="-1.6" y="-7.6" width="3.2" height="4" fill="#1b9ae0" transform="rotate(135)"/><rect x="-1.6" y="-7.6" width="3.2" height="4" fill="#1b9ae0" transform="rotate(180)"/><rect x="-1.6" y="-7.6" width="3.2" height="4" fill="#1b9ae0" transform="rotate(225)"/><rect x="-1.6" y="-7.6" width="3.2" height="4" fill="#1b9ae0" transform="rotate(270)"/><rect x="-1.6" y="-7.6" width="3.2" height="4" fill="#1b9ae0" transform="rotate(315)"/><circle r="2" fill="#fff"/></g><rect x="866.5" y="193.5" width="23" height="23" fill="#4ad7e8" stroke="#1d3550" stroke-width="1.2"/><g fill="#1d3550" stroke="#1d3550" stroke-width="1.3" stroke-linejoin="round"><path d="M873.3 200.4L877.5 196.6 881.7 199z"/><path d="M882 200.1L886.5 204.3 884.2 208.5z"/><path d="M874.7 211.3L882.6 209.1 878.1 213.3z"/><path d="M869.6 205.2L871.9 201.5 873.9 209.7z"/></g>
</svg>
<div class="t" style="left:894px;top:199px;font-size:11.9px">Configure capabilities</div>
<!-- editor frame -->
<div class="a" style="left:276px;top:222px;width:793px;height:253px;background:#fff;border:1px solid #a7b1c1"></div>
<div class="a" style="left:277px;top:223px;width:67px;height:234px;background:#f3f4f6;border-right:1px solid #a7b1c1"></div>
<pre class="a mono" style="left:277px;top:222px;color:#000"><b>1</b>
2
3
4
5
6
7
8
9
10
11
12
13</pre>
<svg style="left:328px;top:223px" width="14" height="234" viewBox="328 223 14 234">
<rect x="329.5" y="227.5" width="8" height="8" fill="#fff" stroke="#8e99ab"/><path d="M331.5 231.5h4" stroke="#8e99ab"/><path d="M333.5 236v91M333.5 326.5h5" stroke="#8e99ab"/>
<rect x="329.5" y="371.5" width="8" height="8" fill="#fff" stroke="#8e99ab"/><path d="M331.5 375.5h4" stroke="#8e99ab"/><path d="M333.5 380v77" stroke="#8e99ab"/>
</svg>
<pre class="a mono" style="left:346px;top:222px;color:#000"><i style="color:#008000">/*
  This test shows how to simulate user actions on .NET applications.

  It runs a C# tested app, loads orders from a file,
  edits an order, creates a new order, and closes the tested app.
*/

// The main test function</i>
<b style="color:#00007f">function</b> Main()
{
  <b style="color:#00007f">let</b> process = RunApplication();
  ChangeRecord(process);
  AddRecord(process);</pre>
<div class="a" style="left:989px;top:223px;width:1px;height:234px;background:#000"></div>
<!-- vscroll -->
<div class="a" style="left:1051px;top:223px;width:17px;height:234px;background:#f3f4f6"></div>
<svg style="left:1055px;top:229px" width="8" height="5"><path d="M0 4H8L4 0Z" fill="#8a93a3"/></svg>
<div class="a" style="left:1054px;top:240px;width:11px;height:26px;background:#b8bfcc"></div>
<svg style="left:1055px;top:446px" width="8" height="5"><path d="M0 0H8L4 4Z" fill="#8a93a3"/></svg>
<!-- hscroll -->
<div class="a" style="left:277px;top:457px;width:774px;height:17px;background:#f3f4f6"></div>
<svg style="left:284px;top:462px" width="4" height="7"><path d="M4 0V7L0 3.5Z" fill="#8a93a3"/></svg>
<div class="a" style="left:294px;top:460px;width:145px;height:12px;background:#b8bfcc"></div>
<svg style="left:1040px;top:462px" width="4" height="7"><path d="M0 0V7L4 3.5Z" fill="#8a93a3"/></svg>
<div class="a" style="left:1051px;top:457px;width:17px;height:17px;background:#eeeeee"></div>
<!-- test visualizer -->
<div class="a" style="left:276px;top:482px;width:793px;height:24px;background:#d6dae2"></div>
<svg style="left:283px;top:485px" width="17" height="17" viewBox="0 0 17 17"><rect x="0" y="4" width="12" height="12" fill="#1b9ae0"/><circle cx="3.5" cy="7.5" r="1.5" fill="#fff"/><path d="M1 15l4-4 2 2 2-3 3 5z" fill="#fff"/><path d="M12 9V2a2 2 0 0 1 4 0v7a2 2 0 0 1-4 0z" fill="none" stroke="#888" stroke-width="1.2"/></svg>
<div class="t" style="left:305px;top:489px;font-size:11px;letter-spacing:-0.2px">Test Visualizer</div>
<svg style="left:1055px;top:490px" width="9" height="9" viewBox="0 0 9 9"><rect x="3.5" y="0.5" width="5" height="5" fill="none" stroke="#5f6b7c"/><rect x="0.5" y="3.5" width="5" height="5" fill="#d6dae2" stroke="#5f6b7c"/></svg>
<!-- bottom tabs -->
<div class="a" style="left:37px;top:507px;width:77px;height:20px;background:#fff;border-left:1px solid #dfe3e9;border-bottom:1px solid #dfe3e9"></div>
<div class="t" style="left:49px;top:513px;font-size:11px;letter-spacing:-0.2px">Bookmarks</div>
<div class="a" style="left:114px;top:507px;width:139px;height:20px;background:#e4e8ee;border-left:1px solid #d6dbe2;border-bottom:1px solid #d6dbe2"></div>
<div class="t" style="left:126px;top:513px;font-size:11px;letter-spacing:-0.2px">Search/Replace Results</div>
<div class="a" style="left:253px;top:507px;width:55px;height:20px;background:#e4e8ee;border-left:1px solid #d6dbe2;border-right:1px solid #d6dbe2;border-bottom:1px solid #d6dbe2"></div>
<div class="t" style="left:266px;top:513px;font-size:11px;letter-spacing:-0.2px">To Do</div>
<!-- status bar -->
<div class="a" style="left:141px;top:533px;width:1px;height:17px;background:#d0d0d0"></div>
<div class="a" style="left:184px;top:533px;width:1px;height:17px;background:#d0d0d0"></div>
<div class="a" style="left:223px;top:533px;width:1px;height:17px;background:#d0d0d0"></div>
<div class="a" style="left:265px;top:533px;width:1px;height:17px;background:#d0d0d0"></div>
<div class="a" style="left:298px;top:533px;width:1px;height:17px;background:#d0d0d0"></div>
<div class="a" style="left:88px;top:533px;width:1px;height:17px;background:#d0d0d0"></div>
<div class="a" style="left:1086px;top:533px;width:1px;height:17px;background:#d0d0d0"></div>
<div class="t" style="left:148px;top:537px;font-size:10.5px;color:#9a9a9a">CAPS</div>
<div class="t" style="left:191px;top:537px;font-size:10.5px;color:#000">NUM</div>
<div class="t" style="left:230px;top:537px;font-size:10.5px;color:#9a9a9a">SCRL</div>
<div class="t" style="left:272px;top:537px;font-size:10.5px;color:#9a9a9a;width:17px;overflow:hidden">OVR</div>
<svg style="left:1090px;top:538px" width="12" height="12"><g fill="#8f8f8f"><rect x="8" y="0" width="2" height="2"/><rect x="4" y="4" width="2" height="2"/><rect x="8" y="4" width="2" height="2"/><rect x="0" y="8" width="2" height="2"/><rect x="4" y="8" width="2" height="2"/><rect x="8" y="8" width="2" height="2"/></g></svg>

<!-- right bars -->
<svg style="left:1069px;top:188px" width="33" height="220" viewBox="1069 188 33 220">
<path d="M1074 204l10-4 10 4v12l-10 4-10-4z" fill="#5f5f5f"/><path d="M1074.5 204l9.5-3.8 9.5 3.8-9.5 3.8z" fill="#8d8d8d"/><path d="M1084 208v12" stroke="#fff" stroke-width="0.8"/>
<rect x="1083" y="209" width="16" height="16" fill="#fff"/><path d="M1085 211h10l2.5 2.5V223H1085z" fill="#fff" stroke="#1b9ae0" stroke-width="1.8"/><rect x="1087.5" y="211" width="6" height="4" fill="#1b9ae0"/><rect x="1087.5" y="218" width="7.5" height="5" fill="none" stroke="#1b9ae0" stroke-width="1.3"/>
<path d="M1087.5 225v6" stroke="#ff8000" stroke-width="1"/>
<path d="M1074 233l10-4 10 4v12l-10 4-10-4z" fill="#5f5f5f"/><path d="M1074.5 233l9.5-3.8 9.5 3.8-9.5 3.8z" fill="#8d8d8d"/>
<path d="M1081 236h17v17h-17z" fill="#fff"/><path d="M1083 251v-13h4l1.5 1.5h7.5v3" fill="#fff" stroke="#1b9ae0" stroke-width="1.6"/><path d="M1083 251.5l3-7h12l-3 7z" fill="#fff" stroke="#1b9ae0" stroke-width="1.6" stroke-linejoin="round"/>
<path d="M1074 264l10-4 10 4v12l-10 4-10-4z" fill="#b9b9b9"/><path d="M1074.5 264l9.5-3.8 9.5 3.8-9.5 3.8z" fill="#d2d2d2"/>
<path d="M1085 272a6 6 0 1 1 4 10" fill="none" stroke="#fff" stroke-width="5"/><path d="M1086 273a5.5 5.5 0 1 1 3.5 9.5" fill="none" stroke="#c4c4c4" stroke-width="2.4"/><path d="M1082 271h6v6z" fill="#c4c4c4"/>
<path d="M1086 292v5l2.5-2.5z" fill="#666"/>
<circle cx="1082.5" cy="334" r="5.5" fill="#707070"/><path d="M1074 351v-5c0-3 3-5 8.5-5s8.5 2 8.5 5v5z" fill="#707070"/>
<circle cx="1091" cy="347" r="7.5" fill="#fff"/><circle cx="1087" cy="347" r="2.3" fill="#1b9ae0"/><circle cx="1095" cy="342.5" r="2.3" fill="#1b9ae0"/><circle cx="1095" cy="351.5" r="2.3" fill="#1b9ae0"/><path d="M1087 347l8-4.5M1087 347l8 4.5" stroke="#1b9ae0" stroke-width="1.6"/>
<circle cx="1082" cy="364" r="5.5" fill="#707070"/><path d="M1074 381v-5c0-3 3-5 8-5s8 2 8 5v5z" fill="#707070"/>
<rect x="1082" y="369.5" width="17" height="15" fill="#fff"/><rect x="1083.5" y="371" width="14" height="12.5" rx="1.5" fill="#fff" stroke="#1b9ae0" stroke-width="1.6"/><rect x="1083.5" y="371" width="14" height="3" fill="#1b9ae0"/><rect x="1086" y="376" width="4" height="5" fill="#1b9ae0"/><rect x="1091.5" y="376" width="4" height="5" fill="#1b9ae0"/>
<path d="M1086 393v5l2.5-2.5z" fill="#666"/>
</svg>

<!-- Workspace group -->
<svg style="left:943px;top:30px" width="25" height="25" viewBox="0 0 25 25"><rect x="1" y="1" width="20" height="19" rx="1.5" fill="#fff" stroke="#737373" stroke-width="2"/><rect x="1" y="1" width="20" height="4" fill="#737373"/><circle cx="4" cy="3" r="0.8" fill="#fff"/><circle cx="6.5" cy="3" r="0.8" fill="#fff"/><circle cx="9" cy="3" r="0.8" fill="#fff"/><path d="M10.5 16.9h13.8M17.4 10v13.8" stroke="#fff" stroke-width="7"/><path d="M11.5 16.9h11.8M17.4 11v11.8" stroke="#16c016" stroke-width="4.2" stroke-linecap="round"/></svg>
<svg style="left:974px;top:30px" width="25" height="25" viewBox="0 0 25 25"><rect x="1" y="1" width="19" height="15" rx="1.5" fill="#fff" stroke="#737373" stroke-width="2"/><rect x="1" y="1" width="19" height="3.5" fill="#737373"/><rect x="4" y="7" width="19" height="15" rx="1.5" fill="#fff" stroke="#737373" stroke-width="2"/><rect x="4" y="7" width="19" height="3.5" fill="#737373"/><circle cx="7" cy="8.8" r="0.7" fill="#fff"/><circle cx="9.5" cy="8.8" r="0.7" fill="#fff"/><circle cx="12" cy="8.8" r="0.7" fill="#fff"/><path d="M12.7 12.5l10.6 10.6M23.3 12.5l-10.6 10.6" stroke="#fff" stroke-width="6.5"/><path d="M13.5 13.3l9 9M22.5 13.3l-9 9" stroke="#c8102e" stroke-width="4" stroke-linecap="round"/></svg>
<svg style="left:1005px;top:30px" width="25" height="25" viewBox="0 0 25 25"><rect x="1" y="1" width="21" height="19" rx="1.5" fill="#fff" stroke="#737373" stroke-width="2"/><rect x="1" y="1" width="21" height="4" fill="#737373"/><circle cx="4" cy="3" r="0.8" fill="#fff"/><circle cx="6.5" cy="3" r="0.8" fill="#fff"/><circle cx="9" cy="3" r="0.8" fill="#fff"/><path d="M12.5 13a5.5 5.5 0 1 1 2.5 10.5" fill="none" stroke="#fff" stroke-width="5.5"/><path d="M12.5 13.2a5.2 5.2 0 1 1 2.3 10" fill="none" stroke="#1b9ae0" stroke-width="2.6"/><path d="M8.5 10.2l6.5-0.5-1 6.5z" fill="#1b9ae0"/></svg>
<svg style="left:1038px;top:41px" width="7" height="4"><path d="M0 0H7L3.5 3.5Z" fill="#8a8a8a"/></svg>
<svg style="left:1073px;top:30px" width="22" height="23" viewBox="0 0 22 23"><path d="M11 2c-4 0-6.5 3-6.5 7v5L1.5 18h19l-3-4V9c0-4-2.5-7-6.5-7z" fill="none" stroke="#6e6e6e" stroke-width="1.8" stroke-linejoin="round"/><path d="M8.5 19.5a2.5 2.5 0 0 0 5 0" fill="none" stroke="#6e6e6e" stroke-width="1.6"/><circle cx="11" cy="1.5" r="1" fill="#6e6e6e"/></svg>
<!-- window border -->
<div class="a" style="left:0;top:0;width:1104px;height:1px;background:#9b9b9b"></div>
<div class="a" style="left:0;top:0;width:1px;height:552px;background:#9b9b9b"></div>
<div class="a" style="left:1103px;top:0;width:1px;height:552px;background:#9b9b9b"></div>
<div class="a" style="left:0;top:551px;width:1104px;height:1px;background:#9b9b9b"></div>

<!-- ORANGE BOXES -->
<div class="ob" style="left:3px;top:24px;width:182px;height:34px"></div>
<div class="ob" style="left:191px;top:24px;width:213px;height:33px"></div>
<div class="ob" style="left:408px;top:24px;width:200px;height:33px"></div>
<div class="ob" style="left:612px;top:25px;width:322px;height:32px"></div>
<div class="ob" style="left:938px;top:25px;width:114px;height:32px"></div>
<div class="ob" style="left:211px;top:60px;width:365px;height:35px"></div>
<div class="ob" style="left:778px;top:61px;width:203px;height:33px"></div>

<!-- labels -->
<div class="ob lb" style="left:16px;top:64px;width:86px;height:28px">Standard</div>
<div class="ol" style="left:65px;top:57px;width:3px;height:8px"></div>
<div class="ob lb" style="left:161px;top:109px;width:76px;height:29px">Edit</div>
<div class="ol" style="left:203px;top:57px;width:3px;height:53px"></div>
<div class="ob lb" style="left:362px;top:113px;width:116px;height:30px">Test Engine</div>
<div class="ol" style="left:418px;top:95px;width:3px;height:19px"></div>
<div class="ob lb" style="left:563px;top:115px;width:76px;height:28px">Tools</div>
<div class="ol" style="left:581px;top:57px;width:3px;height:59px"></div>
<div class="ob lb" style="left:659px;top:115px;width:87px;height:29px">Debug</div>
<div class="ol" style="left:697px;top:57px;width:3px;height:59px"></div>
<div class="ob lb" style="left:835px;top:112px;width:77px;height:29px">TMS</div>
<div class="ol" style="left:871px;top:94px;width:3px;height:19px"></div>
<div class="ob lb" style="left:962px;top:110px;width:100px;height:29px">Workspace</div>
<div class="ol" style="left:1014px;top:57px;width:3px;height:54px"></div>

<div class="ob" style="left:1px;top:98px;width:35px;height:417px"></div>
<div class="ob" style="left:39px;top:155px;width:225px;height:33px"></div>
<div class="ob lb" style="left:64px;top:248px;width:141px;height:33px">Project Explorer</div>
<div class="ol" style="left:138px;top:188px;width:3px;height:61px"></div>
<div class="ob lb" style="left:65px;top:442px;width:141px;height:34px">Source Control</div>
<div class="ol" style="left:36px;top:456px;width:30px;height:3px"></div>
<div class="ob" style="left:1070px;top:188px;width:32px;height:115px"></div>
<div class="ob lb" style="left:873px;top:243px;width:163px;height:33px">Save/Load Snapshots</div>
<div class="ol" style="left:1035px;top:257px;width:36px;height:3px"></div>
<div class="ob" style="left:1070px;top:319px;width:32px;height:84px"></div>
<div class="ob lb" style="left:874px;top:351px;width:151px;height:31px">Issue Tracking</div>
<div class="ol" style="left:1024px;top:364px;width:47px;height:3px"></div>


</body></html>
